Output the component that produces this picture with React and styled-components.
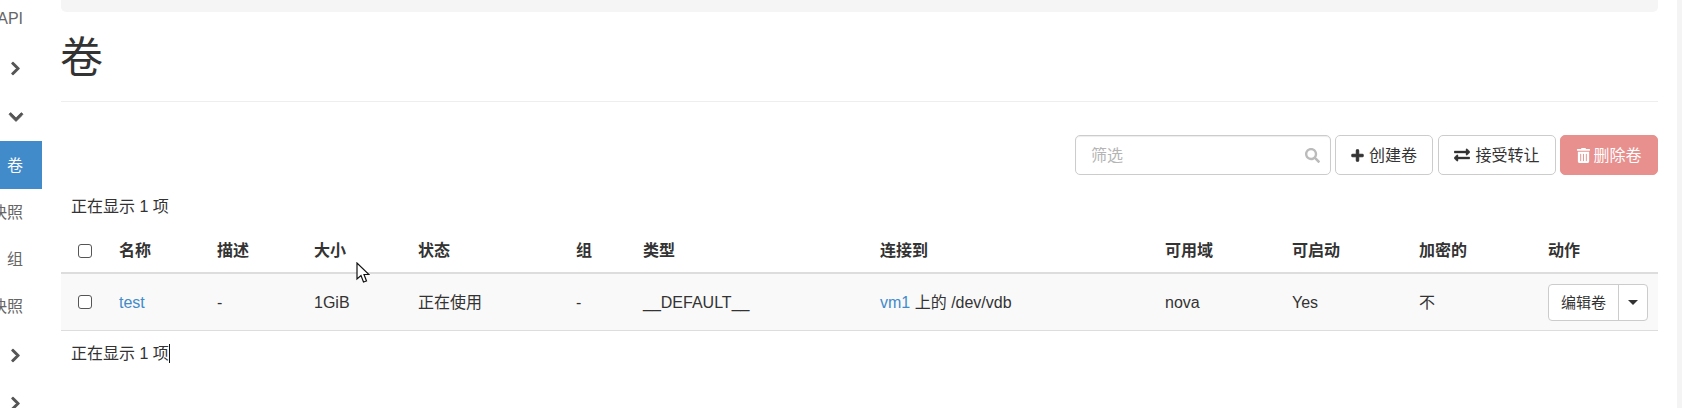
import React from "react";
import styled, { createGlobalStyle } from "styled-components";
import {
	FaChevronDown,
	FaChevronRight,
	FaExchangeAlt,
	FaPlus,
	FaSearch,
	FaTrashAlt,
} from "react-icons/fa";

const GlobalStyle = createGlobalStyle`
	html, body {
		margin: 0;
		height: 408px;
		overflow: hidden;
		background: #fff;
	}
	body {
		font-family: "Liberation Sans", "Noto Sans CJK SC", sans-serif;
		font-size: 16px;
		line-height: 23px;
		color: #333;
	}
`;

const Page = styled.div`
	position: relative;
	display: flex;
	height: 408px;
	overflow: hidden;
`;

const Sidebar = styled.nav`
	flex: 0 0 42px;
	width: 42px;
	margin-top: -6px;
	overflow: hidden;
	color: #666;
`;

const NavRow = styled.div`
	display: flex;
	align-items: center;
	justify-content: flex-end;
	white-space: nowrap;
	height: ${(p) => p.$h || 47}px;
	padding-right: ${(p) => p.$pad || 19}px;
	background: ${(p) => (p.$active ? "#428bca" : "transparent")};
	color: ${(p) => (p.$active ? "#fff" : "#666")};
	svg {
		color: #555;
		flex: none;
		stroke: #555;
		stroke-width: 30;
	}
`;

const Main = styled.main`
	flex: 1;
	min-width: 0;
	margin: 0 19px 0 19px;
`;

const Scrollbar = styled.div`
	flex: 0 0 5px;
	background: #f4f4f4;
`;

const Crumb = styled.div`
	height: 12px;
	background: #f5f5f5;
	border-radius: 0 0 5px 5px;
`;

const PageHeader = styled.header`
	height: 90px;
	border-bottom: 1px solid #eee;
	box-sizing: border-box;
	display: flex;
	align-items: flex-start;
`;

const Title = styled.h1`
	margin: 20px 0 0 -1px;
	font-size: 43px;
	line-height: 52px;
	font-weight: 400;
	color: #333;
`;

const Toolbar = styled.div`
	display: flex;
	justify-content: flex-end;
	gap: 4px;
	height: 40px;
	margin-top: 33px;
`;

const Filter = styled.div`
	position: relative;
	width: 256px;
	height: 40px;
	svg {
		position: absolute;
		right: 11px;
		top: 13px;
		color: #bbb;
	}
`;

const FilterInput = styled.input`
	box-sizing: border-box;
	width: 100%;
	height: 100%;
	padding: 2px 34px 0 15px;
	border: 1px solid #ccc;
	border-radius: 5px;
	box-shadow: inset 0 1px 1px rgba(0, 0, 0, 0.075);
	font: inherit;
	outline: none;
	&::placeholder {
		color: #b5b5b5;
		opacity: 1;
	}
`;

const Button = styled.button`
	box-sizing: border-box;
	display: inline-flex;
	align-items: center;
	justify-content: center;
	gap: ${(p) => p.$gap || 5}px;
	width: ${(p) => p.$w}px;
	height: 40px;
	margin-left: ${(p) => p.$ml || 0}px;
	padding: 0;
	border: 1px solid ${(p) => (p.$danger ? "#e8908e" : "#ccc")};
	border-radius: 5px;
	background: ${(p) => (p.$danger ? "#e8908e" : "#fff")};
	color: ${(p) => (p.$danger ? "#fff" : "#333")};
	font: inherit;
	svg {
		stroke: currentColor;
		stroke-width: ${(p) => p.$bold || 0};
	}
`;

const Count = styled.div`
	height: 23px;
	padding-left: 10px;
	margin-top: ${(p) => p.$top}px;
`;

const Caret = styled.span`
	display: inline-block;
	width: 1px;
	height: 19px;
	background: #111;
	vertical-align: -4px;
`;

const Table = styled.table`
	width: 100%;
	margin-top: 11px;
	border-collapse: collapse;
	table-layout: fixed;
`;

const Th = styled.th`
	height: 44px;
	padding: 0 8px 0 ${(p) => p.$left || 8}px;
	border-bottom: 2px solid #ddd;
	text-align: left;
	font-weight: 700;
	box-sizing: border-box;
`;

const Td = styled.td`
	height: 57px;
	padding: 1px 8px 0 ${(p) => p.$left || 8}px;
	border-bottom: 1px solid #ddd;
	background: #f9f9f9;
	box-sizing: border-box;
`;

const Check = styled.input.attrs({ type: "checkbox" })`
	appearance: none;
	display: block;
	box-sizing: border-box;
	width: 14px;
	height: 14px;
	margin: 0 0 0 -1px;
	border: 1.5px solid #555;
	border-radius: 3px;
	background: #fff;
`;

const Link = styled.a`
	color: #428bca;
	text-decoration: none;
`;

const ActionGroup = styled.div`
	display: flex;
	width: 100px;
	height: 37px;
	box-sizing: border-box;
	border: 1px solid #ccc;
	border-radius: 4px;
	background: #fff;
	font-size: 15px;
`;

const ActionMain = styled.span`
	flex: 1;
	display: flex;
	align-items: center;
	justify-content: center;
	border-right: 1px solid #ccc;
`;

const ActionCaret = styled.span`
	flex: 0 0 28px;
	display: flex;
	align-items: center;
	justify-content: center;
	&::before {
		content: "";
		border-top: 5px solid #333;
		border-left: 5px solid transparent;
		border-right: 5px solid transparent;
	}
`;

const Pointer = styled.svg`
	position: absolute;
	left: 356px;
	top: 262px;
`;

const columns = [
	{ width: 50 },
	{ width: 98, label: "名称" },
	{ width: 97, label: "描述" },
	{ width: 104, label: "大小" },
	{ width: 158, label: "状态" },
	{ width: 67, label: "组" },
	{ width: 237, label: "类型" },
	{ width: 285, label: "连接到" },
	{ width: 127, label: "可用域" },
	{ width: 127, label: "可启动" },
	{ width: 129, label: "加密的" },
	{ width: 118, label: "动作" },
];

const App = () => {
	return (
		<Page>
			<GlobalStyle />
			<Sidebar>
				<NavRow $h={49}>API</NavRow>
				<NavRow $h={50} $pad={19}>
					<FaChevronRight size={15} />
				</NavRow>
				<NavRow $h={48} $pad={18}>
					<FaChevronDown size={16} />
				</NavRow>
				<NavRow $h={48} $active>
					卷
				</NavRow>
				<NavRow>快照</NavRow>
				<NavRow>组</NavRow>
				<NavRow>快照</NavRow>
				<NavRow $h={50} $pad={19}>
					<FaChevronRight size={15} />
				</NavRow>
				<NavRow $pad={19}>
					<FaChevronRight size={15} />
				</NavRow>
			</Sidebar>
			<Main>
				<Crumb />
				<PageHeader>
					<Title>卷</Title>
				</PageHeader>
				<Toolbar>
					<Filter>
						<FilterInput placeholder='筛选' />
						<FaSearch size={15} />
					</Filter>
					<Button $w={98} $bold={40}>
						<FaPlus size={13} />
						创建卷
					</Button>
					<Button $w={118} $bold={12} $ml={1}>
						<FaExchangeAlt size={16} />
						接受转让
					</Button>
					<Button $w={98} $danger $gap={2}>
						<FaTrashAlt size={15} />
						删除卷
					</Button>
				</Toolbar>
				<Count $top={20}>正在显示 1 项</Count>
				<Table>
					<colgroup>
						{columns.map((col, index) => (
							<col key={index} style={{ width: col.width }} />
						))}
					</colgroup>
					<thead>
						<tr>
							{columns.map((col, index) =>
								col.label ? (
									<Th key={index}>{col.label}</Th>
								) : (
									<Th key={index} $left={18}>
										<Check />
									</Th>
								),
							)}
						</tr>
					</thead>
					<tbody>
						<tr>
							<Td $left={18}>
								<Check />
							</Td>
							<Td>
								<Link>test</Link>
							</Td>
							<Td>-</Td>
							<Td>1GiB</Td>
							<Td>正在使用</Td>
							<Td>-</Td>
							<Td>__DEFAULT__</Td>
							<Td>
								<Link>vm1</Link> 上的 /dev/vdb
							</Td>
							<Td>nova</Td>
							<Td>Yes</Td>
							<Td>不</Td>
							<Td>
								<ActionGroup>
									<ActionMain>编辑卷</ActionMain>
									<ActionCaret />
								</ActionGroup>
							</Td>
						</tr>
					</tbody>
				</Table>
				<Count $top={11}>
					正在显示 1 项
					<Caret />
				</Count>
			</Main>
			<Scrollbar />
			<Pointer width='14' height='22' viewBox='0 0 14 22'>
				<path
					d='M1 1 L1 17 L5 13.5 L7.5 20 L10.5 19 L8 12.5 L13 12.5 Z'
					fill='#fff'
					stroke='#111'
					strokeWidth='1.2'
				/>
			</Pointer>
		</Page>
	);
};

export default App;
